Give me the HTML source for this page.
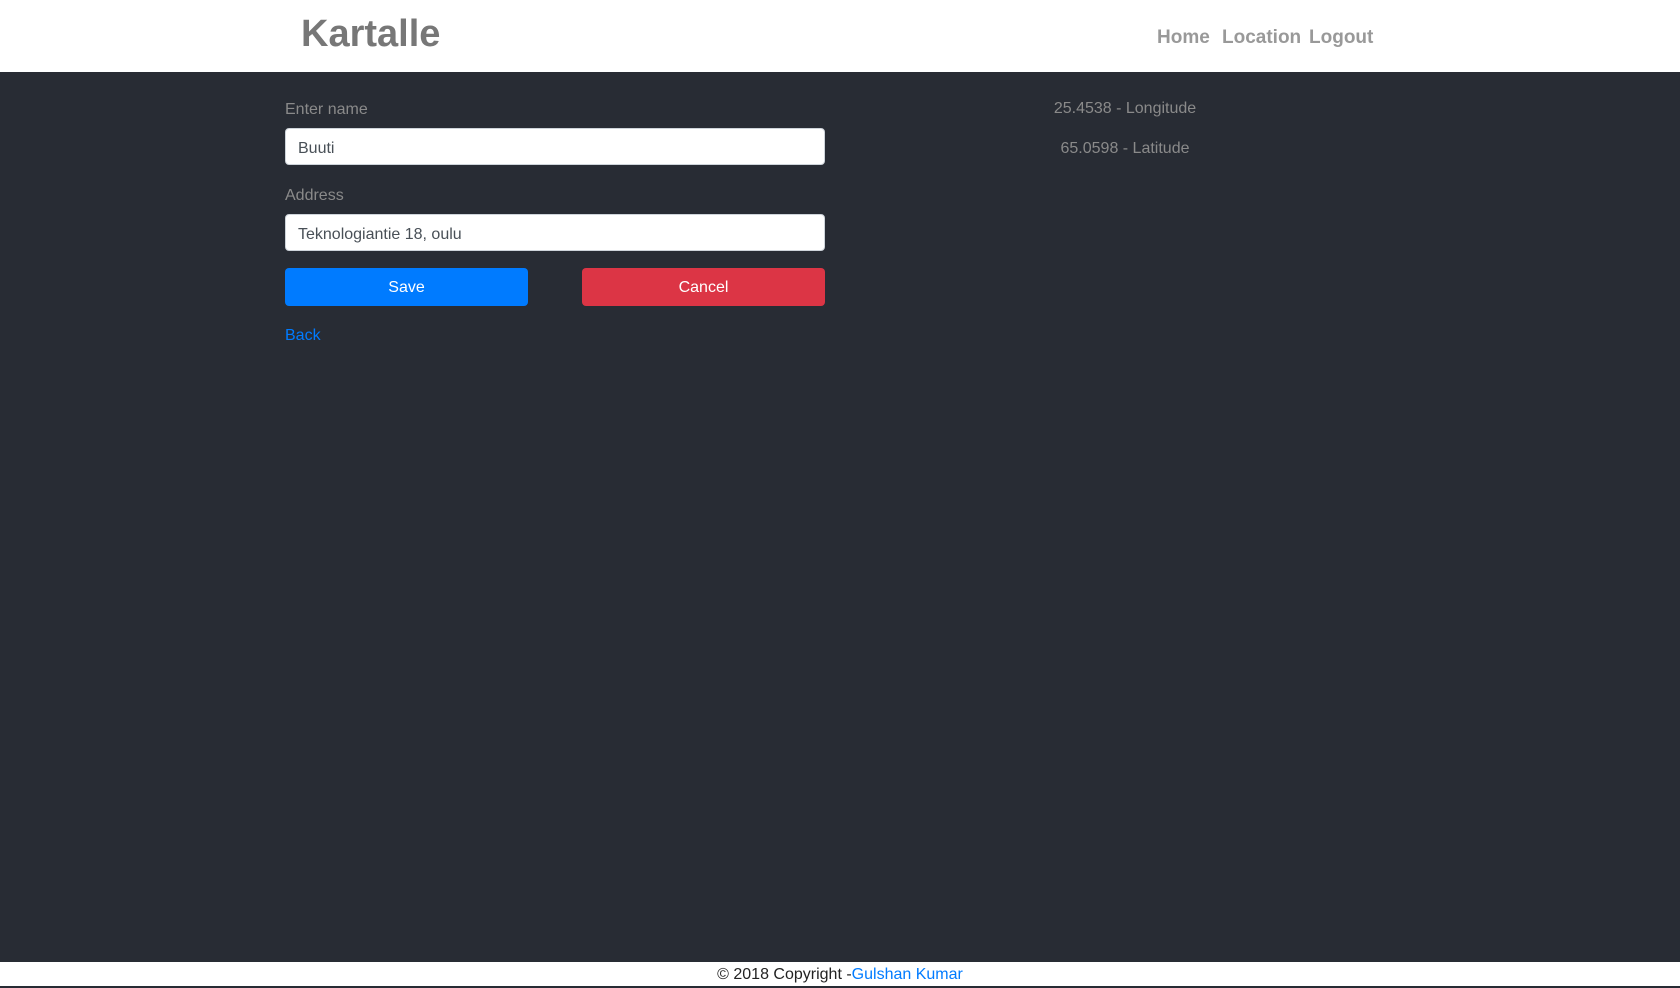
<!DOCTYPE html>
<html><head><meta charset="utf-8"><style>
*{box-sizing:border-box;margin:0;padding:0}
html,body{width:1680px;height:986px;overflow:hidden;font-family:"Liberation Sans",sans-serif;background:#282c34}
.hdr{position:absolute;left:0;top:0;width:1680px;height:72px;background:#fff}
.logo{position:absolute;left:301px;top:13px;font-size:38px;font-weight:bold;color:#777}
.nav{position:absolute;top:27px;font-size:19px;font-weight:bold;color:#999}
.lbl{position:absolute;left:285px;font-size:16px;color:#8a8a8a}
.inp{position:absolute;left:285px;width:540px;height:37px;background:#fff;border:1px solid #ced4da;border-radius:4px;font-size:16px;color:#495057;padding:11px 12px 0;line-height:18px}
.btn{position:absolute;top:268px;width:243px;height:38px;border-radius:4px;color:#fff;font-size:16px;text-align:center;line-height:40px}
.r{position:absolute;left:1000px;width:250px;text-align:center;font-size:16px;color:#8a8a8a}
.ftr{position:absolute;left:0;top:962px;width:1680px;height:24px;background:#fff;text-align:center;font-size:16px;color:#222;line-height:26px}
</style></head><body>
<div class="hdr">
<div class="logo">Kartalle</div>
<div class="nav" style="left:1157px">Home</div>
<div class="nav" style="left:1222px">Location</div>
<div class="nav" style="left:1309px">Logout</div>
</div>
<div class="lbl" style="top:101px">Enter name</div>
<div class="inp" style="top:128px">Buuti</div>
<div class="lbl" style="top:187px">Address</div>
<div class="inp" style="top:214px">Teknologiantie 18, oulu</div>
<div class="btn" style="left:285px;background:#007bff">Save</div>
<div class="btn" style="left:582px;background:#dc3545">Cancel</div>
<div class="lbl" style="top:327px;color:#007bff">Back</div>
<div class="r" style="top:100px">25.4538 - Longitude</div>
<div class="r" style="top:140px">65.0598 - Latitude</div>
<div class="ftr">© 2018 Copyright -<span style="color:#007bff">Gulshan Kumar</span></div>
</body></html>
